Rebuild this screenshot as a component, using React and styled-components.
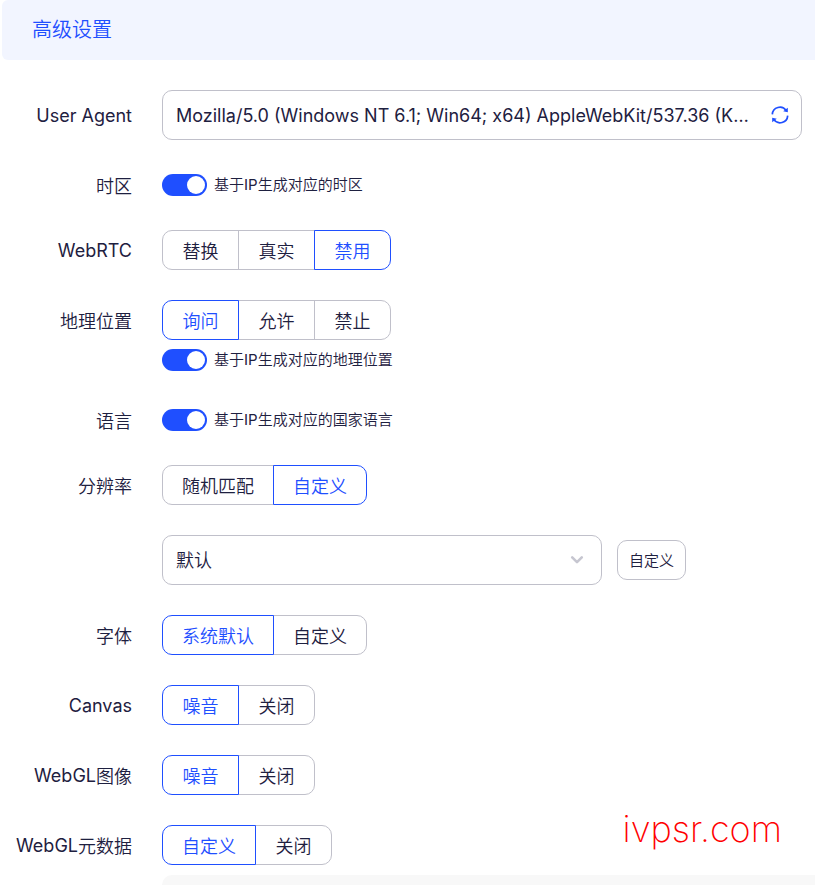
import React, { useId, useState } from "react";
import styled, { createGlobalStyle } from "styled-components";

const USER_AGENT = "Mozilla/5.0 (Windows NT 6.1; Win64; x64) AppleWebKit/537.36 (KHTML, like Gecko) Chrome/108.0.0.0 Safari/537.36";

const Segmented = ({ labelId, options, initial }) => {
    const [value, setValue] = useState(initial);
    const name = useId();

    return (
        <SegmentGroup role="radiogroup" aria-labelledby={labelId}>
            {options.map((option) => (
                <Segment key={option} $active={option === value}>
                    <SegmentInput
                        type="radio"
                        name={name}
                        checked={option === value}
                        onChange={() => setValue(option)}
                    />
                    {option}
                </Segment>
            ))}
        </SegmentGroup>
    );
};

const Toggle = ({ children }) => {
    const [on, setOn] = useState(true);

    return (
        <ToggleLabel>
            <Switch type="checkbox" role="switch" checked={on} onChange={() => setOn(!on)} />
            <ToggleText>{children}</ToggleText>
        </ToggleLabel>
    );
};

const App = () => {
    return (
        <>
            <GlobalStyle />
            <Page>
                <Header>
                    <Title>高级设置</Title>
                </Header>

                <Form onSubmit={(e) => e.preventDefault()}>
                    <Row>
                        <Label as="label" htmlFor="ua" $height={50}><Latin>User Agent</Latin></Label>
                        <InputBox>
                            <TextInput id="ua" readOnly value={USER_AGENT} />
                            <IconButton type="button" aria-label="刷新">
                                <RefreshIcon />
                            </IconButton>
                        </InputBox>
                    </Row>

                    <Row>
                        <Label $height={30}>时区</Label>
                        <Toggle>基于<Latin>IP</Latin>生成对应的时区</Toggle>
                    </Row>

                    <Row>
                        <Label id="webrtc"><Latin>WebRTC</Latin></Label>
                        <Segmented labelId="webrtc" options={["替换", "真实", "禁用"]} initial="禁用" />
                    </Row>

                    <Row>
                        <Label id="geo">地理位置</Label>
                        <Stack>
                            <Segmented labelId="geo" options={["询问", "允许", "禁止"]} initial="询问" />
                            <Toggle>基于<Latin>IP</Latin>生成对应的地理位置</Toggle>
                        </Stack>
                    </Row>

                    <Row>
                        <Label $height={30}>语言</Label>
                        <Toggle>基于<Latin>IP</Latin>生成对应的国家语言</Toggle>
                    </Row>

                    <Row>
                        <Label id="resolution">分辨率</Label>
                        <Stack $gap={30}>
                            <Segmented labelId="resolution" options={["随机匹配", "自定义"]} initial="自定义" />
                            <Inline>
                                <SelectBox>
                                    <Select aria-labelledby="resolution" defaultValue="默认">
                                        <option>默认</option>
                                        <option>1920x1080</option>
                                        <option>1366x768</option>
                                    </Select>
                                    <ChevronIcon />
                                </SelectBox>
                                <SmallButton type="button">自定义</SmallButton>
                            </Inline>
                        </Stack>
                    </Row>

                    <Row>
                        <Label id="font">字体</Label>
                        <Segmented labelId="font" options={["系统默认", "自定义"]} initial="系统默认" />
                    </Row>

                    <Row>
                        <Label id="canvas"><Latin>Canvas</Latin></Label>
                        <Segmented labelId="canvas" options={["噪音", "关闭"]} initial="噪音" />
                    </Row>

                    <Row>
                        <Label id="webgl-image"><Latin>WebGL</Latin>图像</Label>
                        <Segmented labelId="webgl-image" options={["噪音", "关闭"]} initial="噪音" />
                    </Row>

                    <Row>
                        <Label id="webgl-meta"><Latin>WebGL</Latin>元数据</Label>
                        <Stack $gap={10}>
                            <Segmented labelId="webgl-meta" options={["自定义", "关闭"]} initial="自定义" />
                            <MetaPanel />
                        </Stack>
                    </Row>
                </Form>

                <Watermark>ivpsr.com</Watermark>
            </Page>
        </>
    );
};

export default App;

const RefreshIcon = () => (
    <svg width="18" height="18" viewBox="0 0 18 18" fill="none" stroke="currentColor" strokeWidth="1.7" aria-hidden="true">
        <path d="M1.3 8.4A7.6 7.6 0 0 1 15.2 4.6" />
        <path d="M16.7 9.6A7.6 7.6 0 0 1 2.8 13.4" />
        <path d="M16.8 1.8V6.2L12.2 5.2Z" fill="currentColor" stroke="none" />
        <path d="M1.2 16.2V11.8L5.8 12.8Z" fill="currentColor" stroke="none" />
    </svg>
);

const ChevronIcon = () => (
    <svg width="14" height="10" viewBox="0 0 14 10" fill="none" stroke="#c6c6d0" strokeWidth="2.6" strokeLinecap="round" strokeLinejoin="round" aria-hidden="true">
        <path d="M2.2 2.4L7 7.2L11.8 2.4" />
    </svg>
);

const GlobalStyle = createGlobalStyle`
    * {
        box-sizing: border-box;
    }

    body {
        margin: 0;
        background-color: white;
        color: #1e2040;
        font-family: Inter, "Noto Sans CJK SC", sans-serif;
        font-size: 18px;
        font-weight: 350;
    }

    button, input, select {
        font: inherit;
        color: inherit;
    }
`;

const Page = styled.main`
    position: relative;
    padding-left: 2px;
    min-height: 100vh;
    overflow: hidden;
`;

const Header = styled.header`
    display: flex;
    align-items: center;
    height: 60px;
    padding: 0 30px;
    border-radius: 6px 0 0 6px;
    background-color: #f2f5ff;
`;

const Title = styled.h1`
    margin: 0;
    color: #1f4fff;
    font-size: 20px;
    font-weight: 350;
    line-height: 30px;
`;

const Form = styled.form`
    display: flex;
    flex-direction: column;
    gap: 30px;
    padding-top: 30px;
`;

const Row = styled.div`
    display: grid;
    grid-template-columns: 130px minmax(0, 1fr);
    column-gap: 30px;
    align-items: start;
`;

const Label = styled.div`
    display: flex;
    align-items: center;
    justify-content: flex-end;
    height: ${({ $height = 40 }) => $height}px;
    white-space: nowrap;
`;

const Latin = styled.span`
    font-weight: 400;
`;

const Stack = styled.div`
    display: flex;
    flex-direction: column;
    gap: ${({ $gap = 5 }) => $gap}px;
`;

const Inline = styled.div`
    display: flex;
    align-items: center;
    gap: 15px;
`;

const InputBox = styled.div`
    display: flex;
    align-items: center;
    gap: 14px;
    height: 50px;
    margin-right: 13px;
    padding: 0 12px 0 13px;
    border: 1px solid #c0c0ca;
    border-radius: 10px;
`;

const TextInput = styled.input`
    flex: 1;
    min-width: 0;
    padding: 0;
    border: 0;
    outline: 0;
    background: none;
    font-weight: 400;
    text-overflow: ellipsis;
`;

const IconButton = styled.button`
    display: flex;
    padding: 0;
    border: 0;
    background: none;
    color: #1f4fff;
    cursor: pointer;
`;

const SegmentGroup = styled.div`
    display: flex;
`;

const Segment = styled.label`
    position: relative;
    z-index: ${({ $active }) => ($active ? 1 : 0)};
    display: flex;
    align-items: center;
    justify-content: center;
    min-width: 77px;
    height: 40px;
    padding: 0 19px;
    border: 1px solid ${({ $active }) => ($active ? "#1f4fff" : "#c0c0ca")};
    color: ${({ $active }) => ($active ? "#1f4fff" : "inherit")};
    cursor: pointer;

    & + & {
        margin-left: -1px;
    }

    &:first-child {
        border-radius: 10px 0 0 10px;
    }

    &:last-child {
        border-radius: 0 10px 10px 0;
    }
`;

const SegmentInput = styled.input`
    position: absolute;
    inset: 0;
    margin: 0;
    opacity: 0;
    cursor: pointer;
`;

const ToggleLabel = styled.label`
    display: flex;
    align-items: center;
    gap: 7px;
    height: 30px;
    font-size: 15px;
    cursor: pointer;
`;

const ToggleText = styled.span`
    line-height: 20px;
`;

const Switch = styled.input`
    appearance: none;
    display: flex;
    justify-content: ${({ checked }) => (checked ? "flex-end" : "flex-start")};
    width: 45px;
    height: 22px;
    margin: 0;
    padding: 2px;
    border-radius: 11px;
    background-color: ${({ checked }) => (checked ? "#1f4fff" : "#c0c0ca")};
    cursor: pointer;

    &::before {
        content: "";
        width: 18px;
        height: 18px;
        border-radius: 50%;
        background-color: white;
    }
`;

const SelectBox = styled.div`
    display: grid;
    flex: 0 1 440px;
    align-items: center;

    > * {
        grid-area: 1 / 1;
    }

    > svg {
        justify-self: end;
        margin-right: 18px;
        pointer-events: none;
    }
`;

const Select = styled.select`
    appearance: none;
    width: 100%;
    height: 50px;
    padding: 0 40px 0 13px;
    border: 1px solid #c0c0ca;
    border-radius: 10px;
    background: none;
`;

const SmallButton = styled.button`
    height: 40px;
    padding: 0 11px 2px;
    border: 1px solid #c0c0ca;
    border-radius: 10px;
    background: none;
    font-size: 15px;
    cursor: pointer;
`;

const MetaPanel = styled.div`
    height: 60px;
    margin-bottom: -50px;
    border-radius: 10px 0 0 10px;
    background-color: #f8f8f8;
`;

const Watermark = styled.div`
    position: absolute;
    right: 33px;
    bottom: 34px;
    color: #ff0000;
    font-size: 36px;
    font-weight: 200;
    line-height: 44px;
    pointer-events: none;
`;
